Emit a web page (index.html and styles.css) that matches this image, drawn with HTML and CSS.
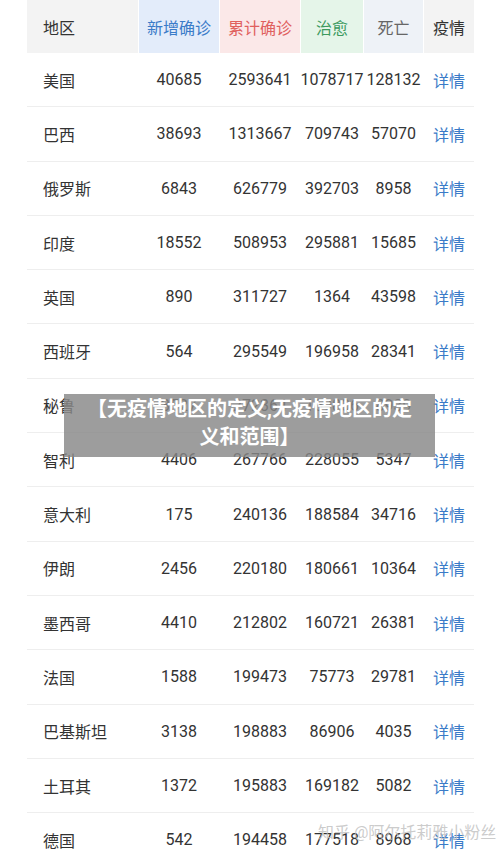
FILE: index.html
```html
<!DOCTYPE html>
<html>
<head>
<meta charset="utf-8">
<title>疫情</title>
<link rel="stylesheet" href="styles.css">
</head>
<body>

<div class="page">
  <div class="table">
    <div class="row head">
      <div class="cell name h-area">地区</div>
      <div class="cell h-new">新增确诊</div>
      <div class="cell h-total">累计确诊</div>
      <div class="cell h-cure">治愈</div>
      <div class="cell h-dead">死亡</div>
      <div class="cell h-area">疫情</div>
    </div>

    <div class="row"><div class="cell name">美国</div><div class="cell">40685</div><div class="cell">2593641</div><div class="cell">1078717</div><div class="cell">128132</div><div class="cell link">详情</div></div>
    <div class="row"><div class="cell name">巴西</div><div class="cell">38693</div><div class="cell">1313667</div><div class="cell">709743</div><div class="cell">57070</div><div class="cell link">详情</div></div>
    <div class="row"><div class="cell name">俄罗斯</div><div class="cell">6843</div><div class="cell">626779</div><div class="cell">392703</div><div class="cell">8958</div><div class="cell link">详情</div></div>
    <div class="row"><div class="cell name">印度</div><div class="cell">18552</div><div class="cell">508953</div><div class="cell">295881</div><div class="cell">15685</div><div class="cell link">详情</div></div>
    <div class="row"><div class="cell name">英国</div><div class="cell">890</div><div class="cell">311727</div><div class="cell">1364</div><div class="cell">43598</div><div class="cell link">详情</div></div>
    <div class="row"><div class="cell name">西班牙</div><div class="cell">564</div><div class="cell">295549</div><div class="cell">196958</div><div class="cell">28341</div><div class="cell link">详情</div></div>
    <div class="row"><div class="cell name">秘鲁</div><div class="cell">3527</div><div class="cell">272364</div><div class="cell">159806</div><div class="cell">8939</div><div class="cell link">详情</div></div>
    <div class="row"><div class="cell name">智利</div><div class="cell">4406</div><div class="cell">267766</div><div class="cell">228055</div><div class="cell">5347</div><div class="cell link">详情</div></div>
    <div class="row"><div class="cell name">意大利</div><div class="cell">175</div><div class="cell">240136</div><div class="cell">188584</div><div class="cell">34716</div><div class="cell link">详情</div></div>
    <div class="row"><div class="cell name">伊朗</div><div class="cell">2456</div><div class="cell">220180</div><div class="cell">180661</div><div class="cell">10364</div><div class="cell link">详情</div></div>
    <div class="row"><div class="cell name">墨西哥</div><div class="cell">4410</div><div class="cell">212802</div><div class="cell">160721</div><div class="cell">26381</div><div class="cell link">详情</div></div>
    <div class="row"><div class="cell name">法国</div><div class="cell">1588</div><div class="cell">199473</div><div class="cell">75773</div><div class="cell">29781</div><div class="cell link">详情</div></div>
    <div class="row"><div class="cell name">巴基斯坦</div><div class="cell">3138</div><div class="cell">198883</div><div class="cell">86906</div><div class="cell">4035</div><div class="cell link">详情</div></div>
    <div class="row"><div class="cell name">土耳其</div><div class="cell">1372</div><div class="cell">195883</div><div class="cell">169182</div><div class="cell">5082</div><div class="cell link">详情</div></div>
    <div class="row"><div class="cell name">德国</div><div class="cell">542</div><div class="cell">194458</div><div class="cell">177518</div><div class="cell">8968</div><div class="cell link">详情</div></div>
  </div>

  <div class="caption">【无疫情地区的定义,无疫情地区的定义和范围】</div>
  <div class="watermark">知乎 @阿尔托莉雅小粉丝</div>
</div>

</body>
</html>
```

FILE: styles.css
```css
html, body {
    margin: 0;
    padding: 0;
    background: #fff;
}

body {
    font-family: Roboto, "Noto Sans CJK SC", sans-serif;
    color: #333;
    font-size: 16px;
    height: 851px;
    overflow: hidden;
}

.page {
    position: relative;
    width: 500px;
    height: 851px;
}

.table {
    margin-left: 27px;
    width: 447px;
}

.row {
    display: grid;
    grid-template-columns: 111px 80px 80px 62px 59px 50px;
    column-gap: 1px;
    height: 54.3px;
    box-sizing: border-box;
    border-bottom: 1px solid #eeeeee;
}

.row.head {
    height: 53px;
    border-bottom: none;
}

.cell {
    display: flex;
    align-items: center;
    justify-content: center;
    white-space: nowrap;
}

.cell.name {
    justify-content: flex-start;
    padding-left: 16px;
}

.link {
    color: #3a7bc8;
}

.head .cell {
    font-size: 16px;
}

.h-area {
    background: #f3f3f3;
    color: #333;
}

.h-new {
    background: #e3ecfa;
    color: #3a7bc8;
}

.h-total {
    background: #fbe8e8;
    color: #e0605e;
}

.h-cure {
    background: #e5f5e9;
    color: #3c9a5e;
}

.h-dead {
    background: #eef2f7;
    color: #666;
}

/* title bar laid over the table */
.caption {
    position: absolute;
    left: 64px;
    top: 394px;
    width: 371px;
    height: 63px;
    box-sizing: border-box;
    padding: 1px 20px 0 20px;
    background: rgba(135, 135, 135, 0.82);
    color: #fff;
    font-weight: bold;
    font-size: 20px;
    line-height: 28px;
    text-align: center;
}

.watermark {
    position: absolute;
    left: 318px;
    top: 819px;
    font-size: 16px;
    color: rgba(190, 190, 190, 0.8);
    white-space: nowrap;
}
```
